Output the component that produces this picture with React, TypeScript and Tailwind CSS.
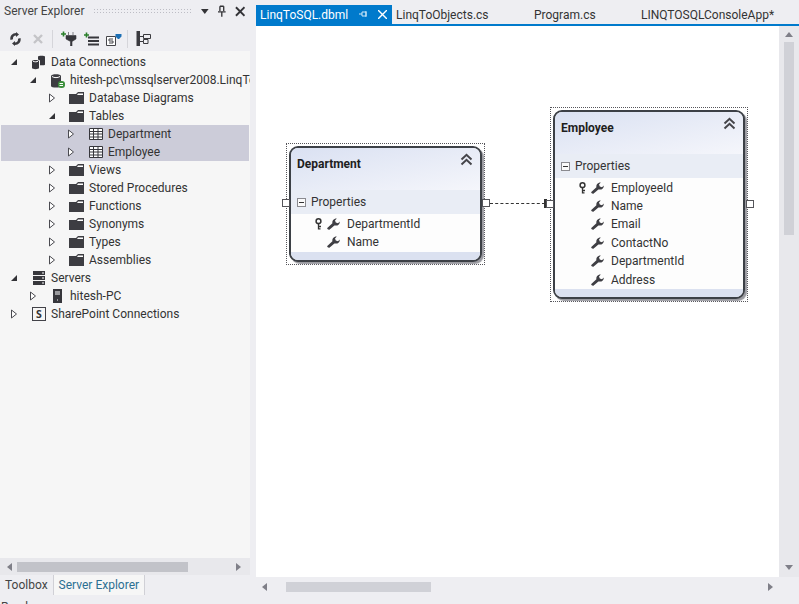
import React from "react";

const Arrow = ({ open }: { open?: boolean }) =>
  open ? (
    <svg width="8" height="8" viewBox="0 0 8 8" className="shrink-0">
      <path d="M7 1V7H1Z" fill="#333337" />
    </svg>
  ) : (
    <svg width="8" height="10" viewBox="0 0 8 10" className="shrink-0">
      <path d="M1.5 1L6.5 5L1.5 9Z" fill="#fff" stroke="#4a4a50" />
    </svg>
  );

const Folder = () => (
  <svg width="15" height="14" viewBox="0 0 15 14">
    <path d="M0 3H7L9 1H15V13H0Z" fill="#3d3d42" />
    <path d="M9 2.5H14V4H8Z" fill="#fff" />
  </svg>
);

const TableIcon = () => (
  <svg width="14" height="12" viewBox="0 0 14 12">
    <path d="M.5.5H13.5V11.5H.5ZM.5 3.5H13.5M.5 6H13.5M.5 9H13.5M4.5.5V11.5M9 .5V11.5" fill="#fff" stroke="#37373c" />
  </svg>
);

const DbGroup = () => (
  <svg width="15" height="15" viewBox="0 0 15 15">
    <path d="M7 1.5C7 .5 14 .5 14 1.5V9.5C14 10.5 10 10.5 9 10.2V5.5L7 4.5Z" fill="#37373c" />
    <path d="M1 6C1 4.5 8 4.5 8 6V13C8 14.5 1 14.5 1 13Z" fill="#37373c" />
    <path d="M2 6.2C3.5 7 6 7 7 6.2" stroke="#fff" fill="none" />
  </svg>
);

const DbConn = () => (
  <svg width="15" height="15" viewBox="0 0 15 15">
    <path d="M1 3C1 .8 11 .8 11 3V13C11 15 1 15 1 13Z" fill="#3d3d42" />
    <path d="M2 3.5C4 5 8 5 10 3.5" stroke="#fff" fill="none" />
    <rect x="8" y="8" width="7" height="7" rx="3" fill="#3c8f3c" />
    <path d="M9.5 10.5H13M9.5 12.5H13" stroke="#fff" />
  </svg>
);

const ServersIcon = () => (
  <svg width="14" height="14" viewBox="0 0 14 14">
    <path d="M1 0H13V4H1ZM1 5H13V9H1ZM1 10H13V14H1Z" fill="#37373c" />
    <path d="M10 2H12M10 7H12M10 12H12" stroke="#fff" />
  </svg>
);

const ServerIcon = () => (
  <svg width="9" height="14" viewBox="0 0 9 14">
    <path d="M0 0H9V14H0Z" fill="#37373c" />
    <path d="M2 3H7M2 5H7M4 11H5" stroke="#fff" />
  </svg>
);

const SharePoint = () => (
  <svg width="14" height="14" viewBox="0 0 14 14">
    <rect x=".5" y=".5" width="13" height="13" fill="#f6f6f6" stroke="#424248" />
    <text x="7" y="11" textAnchor="middle" fontSize="10.5" fontWeight="700" fill="#333" fontFamily="Open Sans, sans-serif">
      S
    </text>
  </svg>
);

const Wrench = () => (
  <svg width="13" height="12" viewBox="0 0 13 12" className="shrink-0">
    <path d="M1 11.5L0 10.2L5.4 5.2C5 3 6.5.5 9.8.6L8 2.6L8.8 4.6L11 5.2L12.8 3.4C13 6.4 10.4 8.2 7.4 7.4L2.4 11.8Z" fill="#3f3f44" />
  </svg>
);

const KeyIcon = () => (
  <svg width="7" height="12" viewBox="0 0 7 12" className="shrink-0">
    <circle cx="3.5" cy="3.2" r="2.4" fill="none" stroke="#333" strokeWidth="1.5" />
    <path d="M3.5 5.5V11.5M3.5 8.5H6M3.5 10.8H5.5" stroke="#333" strokeWidth="1.3" fill="none" />
  </svg>
);

const Chevrons = () => (
  <svg width="13" height="13" viewBox="0 0 13 13">
    <path d="M1.5 6.5L6.5 1.8L11.5 6.5M1.5 11.5L6.5 6.8L11.5 11.5" fill="none" stroke="#45454a" strokeWidth="2" />
  </svg>
);

const treeRows = [
  { depth: 0, open: true, label: "Data Connections", icon: <DbGroup /> },
  { depth: 1, open: true, label: "hitesh-pc\\mssqlserver2008.LinqToSQL.dbo", icon: <DbConn /> },
  { depth: 2, label: "Database Diagrams", icon: <Folder /> },
  { depth: 2, open: true, label: "Tables", icon: <Folder /> },
  { depth: 3, label: "Department", icon: <TableIcon />, selected: true },
  { depth: 3, label: "Employee", icon: <TableIcon />, selected: true },
  { depth: 2, label: "Views", icon: <Folder /> },
  { depth: 2, label: "Stored Procedures", icon: <Folder /> },
  { depth: 2, label: "Functions", icon: <Folder /> },
  { depth: 2, label: "Synonyms", icon: <Folder /> },
  { depth: 2, label: "Types", icon: <Folder /> },
  { depth: 2, label: "Assemblies", icon: <Folder /> },
  { depth: 0, open: true, label: "Servers", icon: <ServersIcon /> },
  { depth: 1, label: "hitesh-PC", icon: <ServerIcon /> },
  { depth: 0, label: "SharePoint Connections", icon: <SharePoint /> },
];

const indents = ["pl-[10px]", "pl-[29px]", "pl-[48px]", "pl-[67px]"];

const TreeRow = ({ row }: { row: (typeof treeRows)[number] }) => (
  <div className={`flex h-[18px] items-center whitespace-nowrap ${indents[row.depth]} ${row.selected ? "mx-[1px] bg-[#ccccd9]" : ""}`}>
    <span className={`flex w-[8px] justify-center ${row.selected ? "ml-[-1px]" : ""}`}>
      <Arrow open={row.open} />
    </span>
    <span className="ml-[13px] flex w-[15px] shrink-0 justify-center">{row.icon}</span>
    <span className="ml-[5px]">{row.label}</span>
  </div>
);

const Field = ({ name, pk }: { name: string; pk?: boolean }) => (
  <div className="flex h-[18.4px] items-center pl-[23px]">
    <span className="flex w-[8px] justify-center">{pk && <KeyIcon />}</span>
    <span className="ml-[5px]"><Wrench /></span>
    <span className="ml-[7px]">{name}</span>
  </div>
);

const EntityCard = ({ title, fields }: { title: string; fields: { name: string; pk?: boolean }[] }) => (
  <div className="h-full p-[2px]">
    <div className="flex h-full flex-col overflow-hidden rounded-[9px] border-2 border-[#3c4046] bg-[#fdfdfd] shadow-[2px_2px_1px_#9a9aa0]">
      <div className="flex h-[42px] shrink-0 items-start justify-between bg-gradient-to-br from-[#dae1f2] to-[#f5f6fb] pl-[6px] pr-[7px]">
        <span className="mt-[10px] text-[12px] font-bold text-[#1e1e1e]">{title}</span>
        <span className="mt-[5px]"><Chevrons /></span>
      </div>
      <div className="flex h-[24px] shrink-0 items-center bg-[#e9edf5] pl-[6px]">
        <span className="flex h-[9px] w-[9px] items-center justify-center border border-[#8a8a8f] bg-[#fafafa]">
          <span className="h-px w-[5px] bg-[#333]" />
        </span>
        <span className="ml-[5px]">Properties</span>
      </div>
      <div className="flex flex-1 flex-col pt-[0.5px]">
        {fields.map((f) => (
          <Field key={f.name} name={f.name} pk={f.pk} />
        ))}
      </div>
      <div className="h-[8px] shrink-0 bg-[#dbe1f0]" />
    </div>
  </div>
);

const Handle = ({ className }: { className: string }) => (
  <div className={`absolute h-[8px] w-[8px] border border-[#55555a] bg-white ${className}`} />
);

const ScrollTriangle = ({ d }: { d: string }) => (
  <svg width="8" height="8" viewBox="0 0 8 8" className="shrink-0">
    <path d={d} fill="#7f7f88" />
  </svg>
);

export default function App() {
  return (
    <div className="flex h-[604px] w-[799px] flex-col overflow-hidden bg-[#eeeef2] font-['Roboto',sans-serif] text-[12px] leading-none text-[#1e1e1e]">
      <div className="flex min-h-0 flex-1">
        {/* server explorer */}
        <aside className="flex w-[250px] flex-col">
          <div className="flex h-[26px] shrink-0 items-center pl-[4px] pr-[5px] pb-[4px]">
            <span className="whitespace-nowrap text-[#444]">Server Explorer</span>
            <div className="ml-[9px] h-[6px] w-[105px] bg-[radial-gradient(#bdbdc5_0.7px,transparent_0.7px)] bg-[length:3px_3px]" />
            <svg width="8" height="5" viewBox="0 0 8 5" className="ml-[8px]"><path d="M0 0H8L4 5Z" fill="#333337" /></svg>
            <svg width="8" height="12" viewBox="0 0 8 12" className="ml-[9px]"><path d="M2 1V6M6 1V6M0 7H8M4 7V12M2 1H6" stroke="#333337" strokeWidth="1.4" fill="none" /></svg>
            <svg width="11" height="11" viewBox="0 0 11 11" className="ml-[9px]"><path d="M1 1L10 10M10 1L1 10" stroke="#333337" strokeWidth="2" /></svg>
          </div>
          <div className="flex h-[25px] shrink-0 items-center pl-[9px]">
            <svg width="13" height="14" viewBox="0 0 13 14"><path d="M1.5 8C.5 4 3.5 1 7 1L7 0 10 2.5 7 5 7 3.4C5 3.4 3.6 5 4 7.2ZM11.5 6C12.5 10 9.5 13 6 13L6 14 3 11.5 6 9 6 10.6C8 10.6 9.4 9 9 6.8Z" fill="#3a3a3f" /></svg>
            <svg width="10" height="10" viewBox="0 0 10 10" className="ml-[11px]"><path d="M1 1L9 9M9 1L1 9" stroke="#c4c4c8" strokeWidth="2.4" /></svg>
            <div className="ml-[9px] h-[18px] w-px bg-[#d5d5da]" />
            <svg width="16" height="15" viewBox="0 0 16 15" className="ml-[8px]"><path d="M0 3H5M2.5 .5V5.5" stroke="#2a7f2a" strokeWidth="1.6" /><path d="M7.5 1V4M12 1V4M5 4.5H15V8L11 10.5V15H9.5V10.5L5 8Z" fill="#37373c" stroke="#37373c" strokeWidth=".6" /></svg>
            <svg width="15" height="14" viewBox="0 0 15 14" className="ml-[7px]"><path d="M0 3H5M2.5 .5V5.5" stroke="#2a7f2a" strokeWidth="1.6" /><path d="M4 4.5H15V6.5H4ZM4 8H15V10H4ZM4 11.5H15V13.5H4Z" fill="#37373c" /></svg>
            <svg width="16" height="15" viewBox="0 0 16 15" className="ml-[7px]"><path d="M.5 5.5H9.5V14.5H.5Z" fill="#fff" stroke="#45454a" /><path d="M7 8H3V10H7V12H3" fill="none" stroke="#45454a" /><path d="M11 0V3M14 0V3M9.5 3H15.5V5.5L13 8H12L9.5 5.5Z" fill="#1b6fb5" /></svg>
            <div className="ml-[5px] h-[18px] w-px bg-[#d5d5da]" />
            <svg width="15" height="15" viewBox="0 0 15 15" className="ml-[8px]"><path d="M.5 0H4V15H.5Z" fill="#3a3a3f" /><path d="M7.5 3.5H14.5V7.5H7.5ZM4 5.5H7.5M4 10.5H7.5V8.5H12V12.5H7.5V10.5" fill="none" stroke="#3a3a3f" /></svg>
          </div>
          <div className="min-h-0 flex-1 overflow-hidden bg-[#f6f6f6] pt-[2px] text-[#333]">
            {treeRows.map((row) => (
              <TreeRow key={row.label} row={row} />
            ))}
          </div>
          <div className="flex h-[17px] shrink-0 items-center bg-[#e8e8ec] pl-[6px] pr-[8px]">
            <ScrollTriangle d="M6 0V8L1 4Z" />
            <div className="ml-[3px] h-[10px] w-[171px] bg-[#c2c3c9]" />
            <div className="flex-1" />
            <ScrollTriangle d="M2 0V8L7 4Z" />
          </div>
          <div className="flex h-[22px] shrink-0 items-start">
            <div className="flex h-[20px] items-center border-r border-[#d0d0d6] px-[5px] text-[#444]">Toolbox</div>
            <div className="flex h-[20px] items-center border-r border-[#d0d0d6] bg-[#f6f6f6] px-[5px] text-[#2b6f92]">Server Explorer</div>
          </div>
        </aside>

        {/* designer */}
        <main className="ml-[6px] flex min-w-0 flex-1 flex-col">
          <div className="flex h-[26px] shrink-0 items-stretch whitespace-nowrap border-b-2 border-[#007acc]">
            <div className="mt-[5px] flex w-[136px] items-center bg-[#007acc] pl-[4px] text-white">
              LinqToSQL.dbml
              <svg width="9" height="9" viewBox="0 0 9 9" className="ml-[11px]"><path d="M3 2V6M3 2H7V6H3M0 4H3M7 1V7" stroke="#d0e8f8" fill="none" /></svg>
              <svg width="9" height="9" viewBox="0 0 9 9" className="ml-[10px]"><path d="M0 0L9 9M9 0L0 9" stroke="#fff" strokeWidth="1.4" /></svg>
            </div>
            <div className="mt-[5px] flex w-[138px] items-center pl-[4px] text-[#333]">LinqToObjects.cs</div>
            <div className="mt-[5px] flex w-[107px] items-center pl-[4px] text-[#333]">Program.cs</div>
            <div className="mt-[5px] flex items-center pl-[4px] text-[#333]">LINQTOSQLConsoleApp*</div>
          </div>
          <div className="flex min-h-0 flex-1">
            <div className="relative flex-1 overflow-hidden bg-white text-[#333]">
              <div className="absolute left-[30px] top-[117px] h-[122px] w-[199px] border border-dotted border-[#55555a]">
                <EntityCard title="Department" fields={[{ name: "DepartmentId", pk: true }, { name: "Name" }]} />
              </div>
              <div className="absolute left-[294px] top-[81px] h-[195px] w-[198px] border border-dotted border-[#55555a]">
                <EntityCard
                  title="Employee"
                  fields={[
                    { name: "EmployeeId", pk: true },
                    { name: "Name" },
                    { name: "Email" },
                    { name: "ContactNo" },
                    { name: "DepartmentId" },
                    { name: "Address" },
                  ]}
                />
              </div>
              <div className="absolute left-[234px] top-[177px] w-[55px] border-t border-dashed border-[#333]" />
              <div className="absolute left-[288px] top-[173px] h-[9px] w-[3px] bg-[#333]" />
              <Handle className="left-[26px] top-[173px]" />
              <Handle className="left-[226px] top-[173px]" />
              <Handle className="left-[290px] top-[174px]" />
              <Handle className="left-[490px] top-[174px]" />
            </div>
            <div className="flex w-[20px] flex-col items-center bg-[#e8e8ec] pb-[6px] pt-[5px]">
              <ScrollTriangle d="M4 1L8 6H0Z" />
              <div className="mt-[3px] h-[193px] w-[10px] bg-[#d0d1d7]" />
              <div className="flex-1" />
              <ScrollTriangle d="M4 7L8 2H0Z" />
            </div>
          </div>
          <div className="flex h-[20px] shrink-0 items-center pl-[5px] pr-[25px]">
            <ScrollTriangle d="M6 0V8L1 4Z" />
            <div className="ml-[17px] h-[10px] w-[145px] bg-[#d0d1d7]" />
            <div className="flex-1" />
            <ScrollTriangle d="M2 0V8L7 4Z" />
          </div>
        </main>
      </div>
      <div className="h-[7px] shrink-0 overflow-hidden pl-[1px] pt-[4px] text-[#444]">Ready</div>
    </div>
  );
}
